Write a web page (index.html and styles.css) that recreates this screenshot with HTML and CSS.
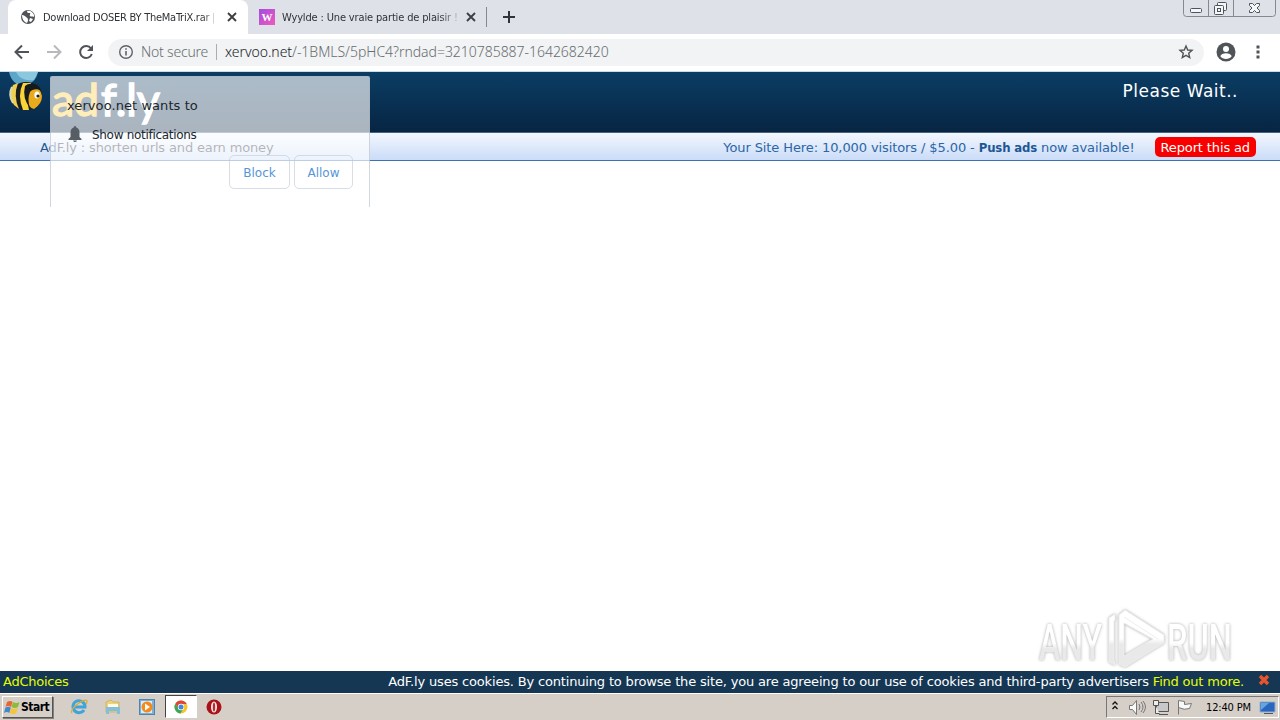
FILE: index.html
```html
<!DOCTYPE html>
<html lang="en">
<head>
    <meta charset="utf-8">
    <title>Download DOSER BY TheMaTriX.rar</title>
    <link rel="stylesheet" href="styles.css">
</head>
<body>

<div class="tabs">
    <div class="tab active">
        <svg class="favicon" width="16" height="16" viewBox="0 0 16 16"><circle cx="8" cy="8" r="7" fill="#505459"/><path d="M2 6c2 0 3 1 4 2s2 1 2 3-1 2-1 3c-3-1-5-4-5-8zM7 2c0 2 1 2 3 2 1 1-1 2 0 3s3 0 4 1V6c-1-3-4-5-7-4zM10 9l3 1-2 3-2-1z" fill="#fff"/></svg>
        <span class="tab-title first">Download DOSER BY TheMaTriX.rar |</span>
        <svg class="tab-close" width="10" height="10" viewBox="0 0 10 10"><path d="M1 1l8 8M9 1l-8 8" stroke="#3c4043" stroke-width="1.9"/></svg>
    </div>
    <div class="tab second">
        <svg class="favicon" width="16" height="16" viewBox="0 0 16 16"><defs><linearGradient id="wy" x1="0" y1="0" x2="1" y2="1"><stop offset="0" stop-color="#a14de0"/><stop offset="1" stop-color="#f05abb"/></linearGradient></defs><rect width="16" height="16" fill="url(#wy)"/><text x="8" y="12" text-anchor="middle" class="wy">W</text></svg>
        <span class="tab-title other">Wyylde : Une vraie partie de plaisir !</span>
        <svg class="tab-close" width="10" height="10" viewBox="0 0 10 10"><path d="M1 1l8 8M9 1l-8 8" stroke="#3c4043" stroke-width="1.9"/></svg>
    </div>
    <i class="divider"></i>
    <svg class="new-tab" width="12" height="12" viewBox="0 0 12 12"><path d="M6 0v12M0 6h12" stroke="#303338" stroke-width="2"/></svg>
    <svg class="win-buttons" width="96" height="18" viewBox="0 0 96 18"><path d="M1.500 0v13.500q0 3 3 3h86q3 0 3-3V0M26.500 0v16M51.500 0v16" fill="none" stroke="#858991"/><g fill="#f5f6f8" stroke="#505359"><rect x="8.500" y="8.500" width="11" height="4" rx="1"/><rect x="35.500" y="2.500" width="9" height="8" rx="1"/><rect x="32.500" y="5.500" width="9" height="9" rx="1"/><rect x="35.500" y="8.500" width="3" height="3"/><path d="M67.500 3.500h3l2 2 2-2h3v2l-2.500 2.500 2.500 2.500v2h-3l-2-2-2 2h-3v-2l2.500-2.500-2.500-2.500z"/></g></svg>
</div>

<div class="toolbar">
    <svg class="nav" width="108" height="38" viewBox="0 0 108 38"><g fill="none" stroke-width="2"><path d="M29 18H16M22 11.500L15.500 18l6.500 6.500" stroke="#505459"/><path d="M47 18h13M54 11.500l6.500 6.500-6.500 6.500" stroke="#b7b9bc"/><path d="M91 14.500A6 6 0 1 0 91.800 20" stroke="#505459"/></g><path d="M93 11v6h-6z" fill="#505459"/></svg>
    <div class="omnibox">
        <svg width="16" height="16" viewBox="0 0 16 16"><circle cx="8" cy="8" r="6.300" fill="none" stroke="#5f6368" stroke-width="1.400"/><path d="M8 7v4.500M8 4.200v1.600" stroke="#5f6368" stroke-width="1.600"/></svg>
        <span class="not-secure">Not secure</span>
        <i class="sep"></i>
        <span class="url"><b>xervoo.net</b>/-1BMLS/5pHC4?rndad=3210785887-1642682420</span>
        <svg class="star" width="16" height="16" viewBox="0 0 16 16"><path d="M8 2l1.700 4 4.300.3-3.300 2.900 1 4.300L8 11.300l-3.700 2.200 1-4.300L2 6.300 6.300 6z" fill="none" stroke="#505459" stroke-width="1.400"/></svg>
    </div>
    <svg class="user" width="20" height="20" viewBox="0 0 20 20"><circle cx="10" cy="10" r="9.500" fill="#505459"/><circle cx="10" cy="7" r="3" fill="#fff"/><path d="M4.300 14.200c1-4 10.400-4 11.400 0-2.700 3.600-8.700 3.600-11.400 0z" fill="#fff"/></svg>
    <svg class="dots" width="4" height="14" viewBox="0 0 4 14"><path d="M.5.500h3v3h-3zM.5 5.500h3v3h-3zM.5 10.500h3v3h-3z" fill="#505459"/></svg>
</div>

<div class="page">
    <div class="header">
        <svg class="logo" width="170" height="60" viewBox="0 0 170 60">
            <path d="M9 0q3 13 15 14 12-3 14-14z" fill="#5da6ca"/><path d="M16 0q5 10 18 8l4-8z" fill="#8bc7df"/>
            <ellipse cx="26" cy="24" rx="16" ry="14" fill="#191d20"/>
            <path d="M13 13q-6 11 1 20l5 4q-6-13-1-26z" fill="#efce52"/>
            <path d="M23 11q-6 12 0 27h6q-4-13 2-27z" fill="#f8d438"/>
            <path d="M29 16q12-2 13 8 0 8-8 13-6-1-7-10 0-7 2-11z" fill="#e9ab1c"/>
            <path d="M25 14q3-3 9-2 5 1 7 6-8-2-11 2-3 7 0 16-8-10-5-22z" fill="#161a1c"/>
            <ellipse cx="37" cy="23" rx="2.600" ry="3.500" fill="#fff"/><circle cx="38" cy="24" r="1.600" fill="#202020"/>
            <path d="M12 15q-4 8 1 16" stroke="#d8d8ba" stroke-width="2" fill="none"/>
            <text x="52" y="44" textLength="47" lengthAdjust="spacingAndGlyphs" class="brand ad">ad</text>
            <text x="101" y="44" textLength="59" lengthAdjust="spacingAndGlyphs" class="brand">f.ly</text>
        </svg>
        <span class="wait">Please Wait..</span>
    </div>
    <div class="ad-bar">
        <span class="slogan">Ad<span class="faded">F.ly : shorten urls and earn money</span></span>
        <span class="site-here">Your Site Here: 10,000 visitors / $5.00 - <b>Push ads</b> now available!</span>
        <span class="report">Report this ad</span>
    </div>
    <div class="content">
        <svg class="watermark" width="200" height="68" viewBox="0 0 200 68">
            <defs><linearGradient id="shade" x1="0" y1="0" x2="0" y2="1"><stop offset=".5" stop-color="#fff"/><stop offset=".6" stop-color="#e9e9e9"/></linearGradient></defs>
            <g class="mark"><text x="3" y="57" textLength="63" lengthAdjust="spacingAndGlyphs">ANY</text><text x="131" y="57" textLength="65" lengthAdjust="spacingAndGlyphs">RUN</text></g>
            <g class="play"><path d="M73 15l6-4v6l-1 1v40l1 1v3l-6-3z"/><path d="M83 12l6-5 39 25v8L89 64l-6-3zM88 20v33l29-17z" fill-rule="evenodd"/><path d="M88 14l34 22"/></g>
        </svg>
    </div>
    <div class="cookies">
        <span class="choices">AdChoices</span>
        <span class="cookie-text">AdF.ly uses cookies. By continuing to browse the site, you are agreeing to our use of cookies and third-party advertisers <em>Find out more.</em></span>
        <svg class="cookie-close" width="12" height="12" viewBox="0 0 12 12"><path d="M2 2l8 8M10 2l-8 8" stroke="#e9532e" stroke-width="3.500"/></svg>
    </div>
</div>

<div class="taskbar">
    <div class="start">
        <svg width="18" height="17" viewBox="0 0 18 17"><path d="M4 3q3-2 5.500-.3L8 8Q5 6 2.500 8z" fill="#e8672e"/><path d="M10 3q3 2 6.500 0L15 8q-3 2-6.500 0z" fill="#8dbb39"/><path d="M2.300 8.700q3-2 5.500 0L6.300 14Q4 12 1 14z" fill="#4288ca"/><path d="M8.300 9q3 2 6.500 0l-1.500 5q-3 2-6.500 0z" fill="#f4c536"/></svg>
        <span>Start</span>
    </div>
    <div class="apps">
        <div class="app"><svg width="18" height="18" viewBox="0 0 18 18"><path d="M14 12a6 6 0 1 1 1-3H5" fill="none" stroke="#3da4dc" stroke-width="3"/><path d="M2 15C-1 11 15-1 17 3c0 1 0 2-1 3" fill="none" stroke="#d9ad38" stroke-width="1.300"/></svg></div>
        <div class="app"><svg width="18" height="18" viewBox="0 0 18 18"><path d="M2 4l5-2 2 2h6v10H2z" fill="#ecd27a" stroke="#c9a94f" stroke-width=".7"/><path d="M4 6h10v3H4z" fill="#fffbe0"/><path d="M2 16V9h14v7h-3v-3H5v3z" fill="#83bfdd"/></svg></div>
        <div class="app"><svg width="18" height="18" viewBox="0 0 18 18"><rect x="1.500" y="1.500" width="15" height="15" fill="#79b0dc" stroke="#5084ac"/><rect x="3" y="3" width="11" height="12" fill="#d9ecf7"/><circle cx="9" cy="9" r="5.500" fill="#f48a18"/><path d="M7 5.500L12 9l-5 3.500z" fill="#fff"/></svg></div>
        <div class="app open"><svg width="16" height="16" viewBox="0 0 16 16"><circle cx="8" cy="8" r="6.500" fill="#f4c62d"/><path d="M2.400 4.600A6.500 6.500 0 0 1 13.700 5H8L5 9z" fill="#dc453a"/><path d="M2.300 4.800A6.500 6.500 0 0 0 7.500 14.500L10 10H6z" fill="#3da55b"/><circle cx="8" cy="8" r="3.200" fill="#fff"/><circle cx="8" cy="8" r="2.500" fill="#4486df"/></svg></div>
        <div class="app"><svg width="16" height="16" viewBox="0 0 16 16"><circle cx="8" cy="8" r="7.500" fill="#a91317"/><ellipse cx="8" cy="8" rx="3" ry="5.500" fill="#f7eeee"/><ellipse cx="8" cy="8" rx="1.200" ry="4.500" fill="#ba2930"/></svg></div>
    </div>
    <div class="tray">
        <svg width="90" height="20" viewBox="0 0 90 20"><g fill="none" stroke="#111" stroke-width="1.300"><path d="M5.500 7.500L8 5l2.500 2.500M5.500 12L8 9.500l2.500 2.500"/></g><g stroke="#77777a"><path d="M22.500 8.500h3l4-5v14l-4-5h-3z" fill="#f9f9f7"/><path d="M32 7q2 3 0 6M34 5q4 5 0 10M36 4q5 6 0 12" fill="none"/><path d="M49.500 5.500h12v9h-12zM52 17.500h9" fill="#c8c8c8" stroke="#555"/><path d="M46.500 3.500h5v5h-5zM48.500 8.500v8h4" fill="#eee" stroke="#555"/><path d="M71.500 17.500v-14l6 1v3l7-1-2 5q-5 2-11-1" fill="#f9f9f7"/></g></svg>
        <span>12:40 PM</span>
        <svg width="17" height="15" viewBox="0 0 17 15"><path d="M1 2h15v10H1z" fill="#2867bd" stroke="#8faed0"/><path d="M2 3h8L2 10z" fill="#68a4df"/><path d="M5 13h9v1H5z" fill="#555"/></svg>
    </div>
</div>

<div class="popup">
    <p class="wants">xervoo.net wants to</p>
    <div class="permission">
        <svg width="16" height="16" viewBox="0 0 14 16"><path d="M7 0q1.300 0 1.300 1.500 3.200 1 3.200 5V11l2 2v1H.5v-1l2-2V6.500q0-4 3.200-5Q5.700 0 7 0zM5 14.500h4q-.5 1.500-2 1.500t-2-1.500z" fill="#565d64"/></svg>
        <span>Show notifications</span>
    </div>
    <div class="buttons"><button class="block">Block</button><button class="allow">Allow</button></div>
</div>

</body>
</html>
```

FILE: styles.css
```css
* {
    box-sizing: border-box;
}

body {
    width: 1280px;
    height: 720px;
    margin: 0;
    overflow: hidden;
    display: flex;
    flex-direction: column;
    background: #fff;
    font-family: "DejaVu Sans", sans-serif;
    font-size: 13px;
    white-space: nowrap;
}

svg {
    display: block;
    flex: none;
}

.tabs {
    display: flex;
    height: 34px;
    background: #dee1e8;
}

.tab {
    display: flex;
    align-items: center;
    height: 34px;
}

.active {
    width: 240px;
    margin-left: 8px;
    padding-left: 12px;
    background: #fff;
    border-radius: 8px 8px 0 0;
}

.second {
    width: 238px;
    padding-left: 11px;
}

.tab-title {
    width: 171px;
    margin-left: 7px;
    overflow: hidden;
    color: #303336;
    font-family: "DejaVu Sans Condensed", "DejaVu Sans", sans-serif;
    font-size: 11px;
    -webkit-mask-image: linear-gradient(to right, #000 158px, transparent 180px);
}

.first {
    letter-spacing: -.25px;
}

.other {
    width: 175px;
    letter-spacing: -.15px;
}

.tab-close {
    margin-left: 13px;
}

.other + .tab-close {
    margin-left: 9px;
}

.wy {
    fill: #fff;
    font: bold 11px "Liberation Serif", serif;
}

.divider {
    width: 1px;
    height: 20px;
    margin-top: 7px;
    background: #85888f;
}

.new-tab {
    margin: 11px 0 0 16px;
}

.win-buttons {
    margin-left: auto;
    margin-right: 2px;
}

.toolbar {
    display: flex;
    height: 38px;
    align-items: center;
    border-bottom: 1px solid #c5deea;
}

.nav {
    margin-top: 1px;
}

.omnibox {
    display: flex;
    align-items: center;
    width: 1096px;
    height: 27px;
    margin-bottom: 1px;
    padding: 0 10px;
    border-radius: 14px;
    background: #f1f3f4;
    color: #686c70;
    font-family: "Noto Sans", sans-serif;
    font-size: 14px;
    font-weight: 300;
    line-height: 18px;
}

.not-secure {
    width: 67px;
    margin-left: 7px;
    letter-spacing: -.2px;
}

.sep {
    width: 1px;
    height: 16px;
    margin: 0 8px;
    background: #aaadb2;
}

.url {
    letter-spacing: -.03px;
}

.url b {
    color: #202124;
    font-weight: 300;
}

.star {
    margin-left: auto;
}

.user {
    margin-left: 12px;
    margin-bottom: 2px;
}

.dots {
    margin-left: 20px;
    margin-bottom: 1px;
}

.page {
    display: flex;
    flex-direction: column;
    height: 621px;
}

.header {
    display: flex;
    justify-content: space-between;
    height: 61px;
    background: linear-gradient(#0b3d64, #072543);
    border-bottom: 1px solid #426483;
}

.brand {
    fill: #fff;
    stroke: #fff;
    stroke-width: 1.5px;
    font: 45px "Lato", sans-serif;
}

.ad {
    fill: #ffc936;
    stroke: #ffc936;
}

.wait {
    margin: 8px 42px 0 0;
    color: #fff;
    font-size: 17px;
    line-height: 22px;
    letter-spacing: .5px;
}

.ad-bar {
    display: flex;
    align-items: center;
    height: 28px;
    padding: 2px 24px 0 40px;
    border-bottom: 1px solid #3c71b4;
    background: linear-gradient(#f3f7fd, #cadcf8);
    color: #2b66a8;
}

.slogan {
    width: 232px;
    color: #24588d;
    letter-spacing: -.15px;
}

.faded {
    color: #1d2834;
}

.site-here {
    margin-left: auto;
    margin-right: 20px;
    letter-spacing: -.1px;
}

.site-here b {
    color: #1e5795;
    font-family: "DejaVu Sans Condensed", sans-serif;
    letter-spacing: -.15px;
}

.report {
    height: 20px;
    margin-bottom: 1px;
    padding: 0 6px;
    border-radius: 5px;
    background: #f80000;
    color: #fff;
    line-height: 21px;
    letter-spacing: -.13px;
}

.content {
    display: flex;
    flex: 1;
    align-items: flex-end;
    justify-content: flex-end;
    padding: 0 44px 0 0;
}

.watermark {
    filter: drop-shadow(0 0 1.5px #aaa);
}

.mark {
    fill: url(#shade);
    font: 500 50px "Roboto", sans-serif;
}

.play {
    fill: url(#shade);
    stroke: #eee;
    stroke-linejoin: round;
}

.cookies {
    display: flex;
    align-items: center;
    height: 22px;
    padding: 0 10px 2px 3px;
    background: #153754;
    color: #fff;
}

.choices,
.cookies em {
    color: #e6ff00;
    font-style: normal;
}

.choices {
    letter-spacing: -.25px;
}

.cookie-text {
    margin-left: auto;
    margin-right: 14px;
    letter-spacing: -.17px;
}

.cookies em {
    letter-spacing: -.2px;
}

.cookie-close {
    margin-bottom: 2px;
}

.taskbar {
    display: flex;
    height: 27px;
    padding-top: 1px;
    border-top: 1px solid #fff;
    background: #d5cfc8;
}

.start {
    display: flex;
    align-items: center;
    width: 51px;
    height: 22px;
    margin: 1px 0 0 2px;
    border: 1px solid;
    border-color: #fff #555 #555 #fff;
    box-shadow: 1px 1px #858079;
    font-family: "DejaVu Sans Condensed", sans-serif;
    font-size: 12px;
    font-weight: bold;
    letter-spacing: -.5px;
}

.apps {
    display: flex;
    margin-left: 11px;
}

.app {
    display: flex;
    align-items: center;
    justify-content: center;
    width: 30px;
    height: 23px;
    margin-right: 4px;
}

.open {
    width: 32px;
    margin: 0 2px 0 -1px;
    border: 1px solid;
    border-color: #444 #fff #fff #444;
    background: #fff;
}

.tray {
    display: flex;
    align-items: center;
    width: 173px;
    height: 22px;
    margin: 1px 1px 0 auto;
    border: 1px solid;
    border-color: #777 #fff #fff #777;
    font-family: "DejaVu Sans Condensed", sans-serif;
    font-size: 11px;
}

.tray span {
    width: 46px;
    margin-left: 9px;
    margin-right: 7px;
    letter-spacing: -.15px;
}

.popup {
    position: absolute;
    top: 76px;
    left: 50px;
    width: 320px;
    height: 131px;
    padding: 18px 16px 0;
    border: solid rgba(165, 174, 187, .5);
    border-width: 1px 1px 0;
    border-radius: 2px 2px 0 0;
    background: rgba(255, 255, 255, .66);
    color: #20262c;
    font-size: 12px;
}

.wants {
    margin: 0;
    font-size: 13px;
    line-height: 21px;
    letter-spacing: .07px;
}

.permission {
    display: flex;
    gap: 9px;
    margin-top: 10px;
    line-height: 18px;
    letter-spacing: -.3px;
}

.buttons {
    display: flex;
    gap: 4px;
    justify-content: flex-end;
    margin-top: 11px;
}

.buttons button {
    width: 61px;
    height: 34px;
    padding: 1px 0 0;
    border: 1px solid rgba(190, 200, 214, .6);
    border-radius: 5px;
    background: transparent;
    color: #5595d8;
    font-family: "DejaVu Sans", sans-serif;
    font-size: 12px;
}

.buttons .allow {
    width: 59px;
}
```
